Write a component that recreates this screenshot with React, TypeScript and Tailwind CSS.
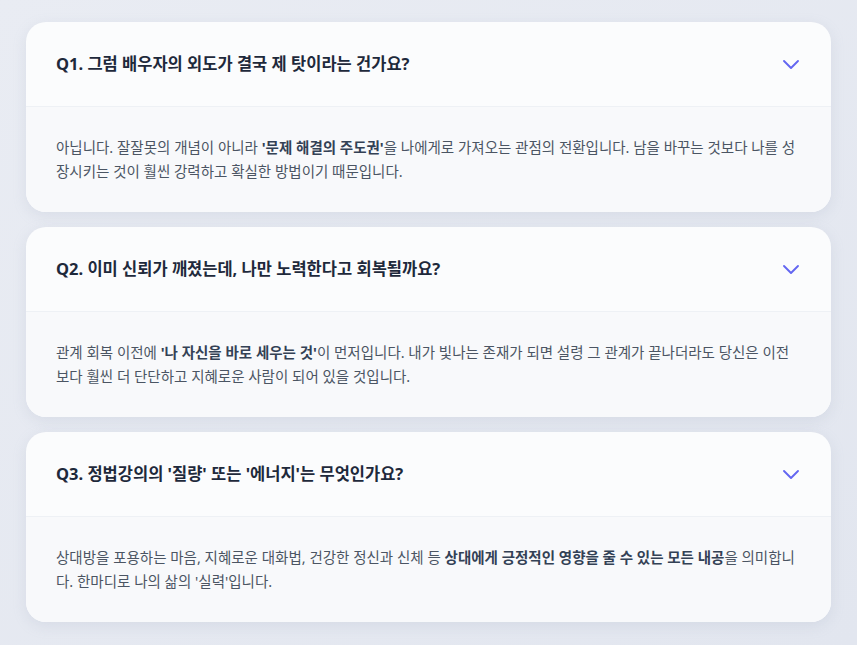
import React from "react";

type Item = { q: string; a: React.ReactNode };

const items: Item[] = [
  {
    q: "Q1. 그럼 배우자의 외도가 결국 제 탓이라는 건가요?",
    a: (
      <>
        아닙니다. 잘잘못의 개념이 아니라 <b className="font-bold text-[#334155]">'문제 해결의 주도권'</b>을 나에게로 가져오는 관점의 전환입니다. 남을 바꾸는 것보다 나를 성장시키는 것이 훨씬 강력하고 확실한 방법이기 때문입니다.
      </>
    ),
  },
  {
    q: "Q2. 이미 신뢰가 깨졌는데, 나만 노력한다고 회복될까요?",
    a: (
      <>
        관계 회복 이전에 <b className="font-bold text-[#334155]">'나 자신을 바로 세우는 것'</b>이 먼저입니다. 내가 빛나는 존재가 되면 설령 그 관계가 끝나더라도 당신은 이전보다 훨씬 더 단단하고 지혜로운 사람이 되어 있을 것입니다.
      </>
    ),
  },
  {
    q: "Q3. 정법강의의 '질량' 또는 '에너지'는 무엇인가요?",
    a: (
      <>
        상대방을 포용하는 마음, 지혜로운 대화법, 건강한 정신과 신체 등 <b className="font-bold text-[#334155]">상대에게 긍정적인 영향을 줄 수 있는 모든 내공</b>을 의미합니다. 한마디로 나의 삶의 '실력'입니다.
      </>
    ),
  },
];

function Chevron() {
  return (
    <svg width="24" height="24" viewBox="0 0 24 24" fill="none" stroke="#6366f1" strokeWidth="1.9" strokeLinecap="round" strokeLinejoin="round">
      <path d="M5 9l7 7 7-7" />
    </svg>
  );
}

export default function App() {
  return (
    <div
      className="min-h-[645px] w-full bg-gradient-to-br from-[#e9ecf3] to-[#e2e6ef] px-[26px] pt-[22px] pb-[24px]"
      style={{ fontFamily: '"Noto Sans", "Noto Sans CJK KR", sans-serif' }}
    >
      <div className="flex flex-col gap-[15px]">
        {items.map((it, i) => (
          <div
            key={i}
            className="overflow-hidden rounded-[20px] bg-[#fbfcfd] shadow-[0_4px_14px_rgba(148,163,184,0.18)]"
          >
            <div className="flex h-[85px] items-center justify-between border-b border-[#eef1f5] pl-[30px] pr-[28px]">
              <span className="text-[16.5px] font-bold text-[#1e293b]">{it.q}</span>
              <Chevron />
            </div>
            <div className="bg-[#f8f9fb] px-[30px] pt-[28px] pb-[29px] text-[14.5px] leading-[24px] text-[#4b5563]">
              {it.a}
            </div>
          </div>
        ))}
      </div>
    </div>
  );
}
